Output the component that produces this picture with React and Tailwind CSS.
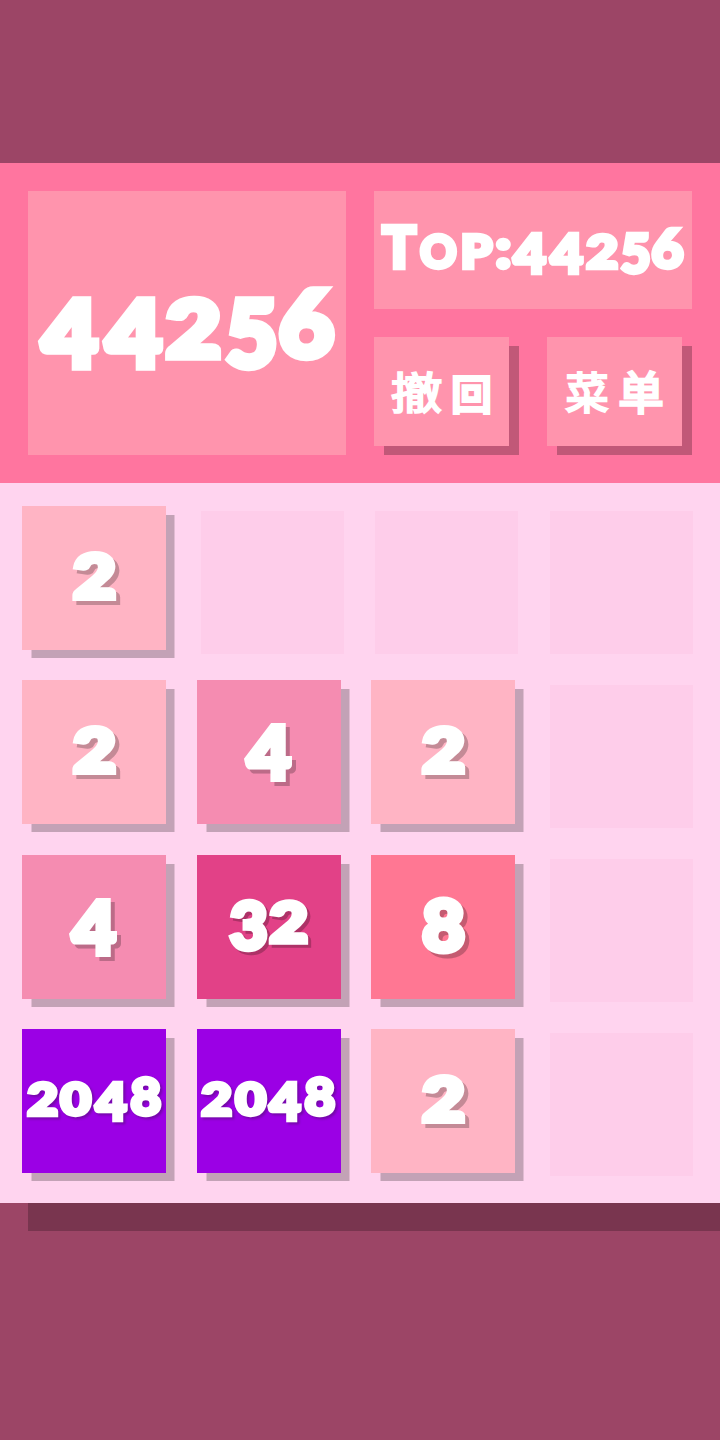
import React from "react";

// One em of a Numeral equals the height of its "2"; advance widths and glyph sizes derive from it.
const GLYPHS = {
  "0": { advance: "w-[0.955em]", shape: "text-[1.21em] scale-x-[1.2]" },
  "2": { advance: "w-[0.9em]", shape: "text-[1.21em] scale-x-[1.2]" },
  "3": { advance: "w-[0.88em]", shape: "text-[1.42em] translate-y-[0.11em] scale-x-[1.02]" },
  "4": { advance: "w-[0.99em]", shape: "text-[1.44em] translate-y-[0.105em] scale-x-[1.04]" },
  "5": { advance: "w-[0.84em]", shape: "text-[1.44em] translate-x-[0.02em] translate-y-[0.105em] scale-x-[0.96]" },
  "6": { advance: "w-[0.93em]", shape: "text-[1.42em] scale-x-[1.04]" },
  "8": { advance: "w-[0.94em]", shape: "text-[1.41em] scale-x-[1.04]" },
  T: { advance: "w-[0.99em]", shape: "text-[1.53em] scale-x-[0.98]" },
  O: { advance: "w-[1.08em]", shape: "text-[1.22em] scale-x-[0.98]" },
  P: { advance: "w-[0.97em]", shape: "text-[1.24em] scale-x-[1.08]" },
  ":": { advance: "w-[0.45em]", shape: "text-[1.5em] scale-x-[1.1]" },
};

function Numeral({ text, className }) {
  return (
    <div
      className={
        "whitespace-nowrap font-['Lato',sans-serif] font-black leading-none text-white [-webkit-text-stroke:0.12em_white] [stroke-linejoin:round] " +
        className
      }
    >
      {text.split("").map((char, i) => (
        <span key={i} className={"inline-flex justify-center " + GLYPHS[char].advance}>
          <span className={"inline-block leading-none " + GLYPHS[char].shape}>{char}</span>
        </span>
      ))}
    </div>
  );
}

const TILE_STYLES = {
  2: { tile: "bg-[#ffb4c4]", text: "-translate-y-[3px] text-[50px] drop-shadow-[4.5px_4.5px_0_rgba(0,0,0,0.23)]" },
  4: { tile: "bg-[#f58cb1]", text: "-translate-y-[9px] text-[50px] drop-shadow-[4.5px_4.5px_0_rgba(0,0,0,0.23)]" },
  8: { tile: "bg-[#ff7793]", text: "-translate-y-[2px] text-[50px] drop-shadow-[4.5px_4.5px_0_rgba(0,0,0,0.23)]" },
  32: { tile: "bg-[#e24187]", text: "-translate-y-[9px] text-[45px] drop-shadow-[3.5px_3.5px_0_rgba(0,0,0,0.23)]" },
  2048: { tile: "bg-[#9b00e5]", text: "-translate-y-[5px] text-[36px] drop-shadow-[2px_2px_1px_rgba(60,20,80,0.4)]" },
};

const BOARD = [
  [2, 0, 0, 0],
  [2, 4, 2, 0],
  [4, 32, 8, 0],
  [2048, 2048, 2, 0],
];

function Tile({ value }) {
  if (!value) return <div className="ml-[4.2px] mt-[4.5px] size-[143px] bg-[#fecdea]" />;
  const style = TILE_STYLES[value];
  return (
    <div
      className={
        "flex size-[144px] items-center justify-center shadow-[9px_8.5px_0_-0.5px_rgba(0,0,0,0.235)] " + style.tile
      }
    >
      <Numeral text={String(value)} className={style.text} />
    </div>
  );
}

function ActionButton({ children }) {
  return (
    <button className="flex h-[109px] w-[135px] items-center justify-center bg-[#ff94ad] text-white shadow-[10px_9px_0_rgba(0,0,0,0.245)]">
      {children}
    </button>
  );
}

const CJK =
  "inline-block font-['Noto_Sans_CJK_SC',sans-serif] font-normal leading-none [stroke-linejoin:round]";

export default function App() {
  return (
    <main className="h-[1440px] w-[720px] overflow-hidden bg-[#9c4566] pt-[163px]">
      <section className="w-[720px] shadow-[28px_28px_0_rgba(0,0,0,0.22)]">
        <header className="flex h-[320px] gap-7 bg-[#ff759f] p-7">
          <div className="flex h-[264px] w-[318px] items-center justify-center bg-[#ff94ad]">
            <Numeral text="44256" className="-translate-y-px text-[64px]" />
          </div>
          <div className="flex w-[318px] flex-col gap-7">
            <div className="flex h-[118px] items-center justify-center bg-[#ff94ad]">
              <Numeral text="TOP:44256" className="-translate-y-[3.5px] text-[37.3px]" />
            </div>
            <div className="flex gap-[38px]">
              <ActionButton>
                <span className={CJK + " -translate-y-px scale-x-[1.2] text-[43px] [-webkit-text-stroke:2px_white]"}>撤</span>
                <span className={CJK + " ml-[11px] translate-x-[3px] text-[40px] [-webkit-text-stroke:4px_white]"}>回</span>
              </ActionButton>
              <ActionButton>
                <span className={CJK + " -translate-y-px text-[43px] [-webkit-text-stroke:2.4px_white]"}>菜</span>
                <span className={CJK + " ml-[10px] -translate-y-px text-[45px] [-webkit-text-stroke:3px_white]"}>单</span>
              </ActionButton>
            </div>
          </div>
        </header>
        <div className="grid h-[720px] auto-rows-[174.33px] grid-cols-[repeat(4,174.5px)] items-start bg-[#ffd4ef] pl-[22.3px] pt-[23px]">
          {BOARD.flat().map((value, i) => (
            <Tile key={i} value={value} />
          ))}
        </div>
      </section>
    </main>
  );
}
